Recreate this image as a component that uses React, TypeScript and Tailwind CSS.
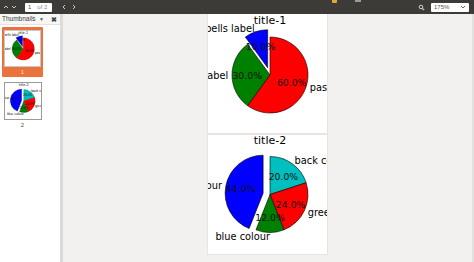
import React from 'react'

const chartFont = '"DejaVu Sans", "Liberation Sans", sans-serif'

type Slice = { frac: number; color: string; label: string; explode?: number }

const R = 38

// point on a circle, degrees counter-clockwise from 3 o'clock, screen y down
const pt = (cx: number, cy: number, r: number, deg: number) => {
  const a = (deg * Math.PI) / 180
  return [cx + r * Math.cos(a), cy - r * Math.sin(a)]
}

const PieChart = ({
  title,
  slices,
  clockwise,
  cy,
}: {
  title: string
  slices: Slice[]
  clockwise?: boolean
  cy: number
}) => {
  const cx = 62
  let angle = 90
  const parts = slices.map((s) => {
    const sweep = 360 * s.frac
    const a1 = clockwise ? angle - sweep : angle
    const a2 = clockwise ? angle : angle + sweep
    angle = clockwise ? angle - sweep : angle + sweep
    const mid = (a1 + a2) / 2
    const [ox, oy] = s.explode ? pt(0, 0, s.explode, mid) : [0, 0]
    const x = cx + ox
    const y = cy + oy
    const [x1, y1] = pt(x, y, R, a1)
    const [x2, y2] = pt(x, y, R, a2)
    const large = sweep > 180 ? 1 : 0
    const d = `M${x},${y} L${x1},${y1} A${R},${R} 0 ${large} 0 ${x2},${y2} Z`
    const [px, py] = pt(x, y, R * 0.6, mid)
    const [lx, ly] = pt(x, y, R * 1.1, mid)
    const left = Math.cos((mid * Math.PI) / 180) > 0.01
    return { s, d, px, py, lx, ly, left }
  })

  return (
    <svg width="119" height="119" viewBox="0 0 119 119" className="block" style={{ fontFamily: chartFont }}>
      <rect width="119" height="119" fill="#ffffff" />
      <text x={cx} y={cy - 51} fontSize="11" textAnchor="middle" fill="#000">
        {title}
      </text>
      {parts.map((p, i) => (
        <path key={i} d={p.d} fill={p.s.color} stroke="#000" strokeWidth="0.6" strokeLinejoin="round" />
      ))}
      {parts.map((p, i) => (
        <text key={'p' + i} x={p.px} y={p.py} fontSize="9.3" textAnchor="middle" dominantBaseline="central" fill="#111">
          {(p.s.frac * 100).toFixed(1)}%
        </text>
      ))}
      {parts.map((p, i) => (
        <text
          key={'l' + i}
          x={p.lx}
          y={p.ly}
          fontSize="9.8"
          textAnchor={p.left ? 'start' : 'end'}
          dominantBaseline="central"
          fill="#000"
        >
          {p.s.label}
        </text>
      ))}
    </svg>
  )
}

const Page1 = () => (
  <PieChart
    title="title-1"
    cy={61}
    slices={[
      { frac: 0.1, color: '#0000ff', label: 'bells label', explode: 7.6 },
      { frac: 0.3, color: '#008000', label: 'green label' },
      { frac: 0.6, color: '#ff0000', label: 'pasta label' },
    ]}
  />
)

const Page2 = () => (
  <PieChart
    title="title-2"
    cy={59.5}
    clockwise
    slices={[
      { frac: 0.2, color: '#00bfbf', label: 'back colour' },
      { frac: 0.24, color: '#ff0000', label: 'green colour' },
      { frac: 0.12, color: '#008000', label: 'blue colour' },
      { frac: 0.44, color: '#0000ff', label: 'red colour', explode: 7 },
    ]}
  />
)

const Chevron = ({ dir }: { dir: 'up' | 'down' | 'left' | 'right' }) => {
  const d = {
    up: 'M1 4 L3 2 L5 4',
    down: 'M1 2 L3 4 L5 2',
    left: 'M4 1 L2 3 L4 5',
    right: 'M2 1 L4 3 L2 5',
  }[dir]
  return (
    <svg width="6" height="6" viewBox="0 0 6 6" className="block">
      <path d={d} fill="none" stroke="#c9c8c4" strokeWidth="1" />
    </svg>
  )
}

const Toolbar = () => (
  <div className="flex h-[14px] items-center bg-[#3c3b37] pl-[3px]" style={{ fontFamily: '"Liberation Sans", sans-serif' }}>
    <Chevron dir="up" />
    <div className="ml-[2px]">
      <Chevron dir="down" />
    </div>
    <div className="ml-[8px] flex h-[9px] w-[27px] items-center rounded-[1px] bg-white pl-[3px] text-[6px] leading-none text-[#555]">
      <span>1</span>
      <span className="ml-[6px] text-[#888]">of 2</span>
    </div>
    <div className="ml-[9px]">
      <Chevron dir="left" />
    </div>
    <div className="ml-[4px]">
      <Chevron dir="right" />
    </div>
    <div className="ml-[255px] h-[3px] w-[5px] self-start rounded-b-[1px] bg-[#e9a33b]" />
    <div className="ml-[18px] h-[2px] w-[6px] self-start bg-[#9c9b97]" />
    <svg width="7" height="7" viewBox="0 0 7 7" className="ml-[57px] block">
      <circle cx="3" cy="3" r="1.8" fill="none" stroke="#d4d3cf" strokeWidth="1" />
      <path d="M4.3 4.3 L6.2 6.2" stroke="#d4d3cf" strokeWidth="1.2" />
    </svg>
    <div className="ml-[6px] flex h-[9px] w-[38px] items-center justify-between rounded-[1px] bg-white px-[3px] text-[6px] leading-none text-[#555]">
      <span>175%</span>
      <svg width="6" height="6" viewBox="0 0 6 6" className="block">
        <path d="M1 2 L3 4 L5 2" fill="none" stroke="#555" strokeWidth="0.9" />
      </svg>
    </div>
  </div>
)

const Sidebar = () => (
  <div
    className="flex w-[63px] flex-col border-r-[3px] border-[#dcdbd8] bg-white"
    style={{ fontFamily: '"Liberation Sans", sans-serif' }}
  >
    <div className="flex h-[11px] items-center border-b border-[#e4e3e0] bg-[#f6f6f5] pl-[2px] pr-[3px] text-[6.5px] leading-none text-[#3c3c3c]">
      <span>Thumbnails</span>
      <span className="ml-auto text-[5px] text-[#555]">▼</span>
      <span className="ml-[7px] text-[7px] font-bold text-[#444]">✖</span>
    </div>
    <div className="flex flex-col pl-[2px] pt-[2px]">
      <div className="flex w-[41px] flex-col items-center rounded-[1px] bg-[#e9733b] pt-[3px]">
        <div className="border border-[#c8c8c8] bg-white">
          <svg width="35" height="35" viewBox="0 0 119 119" className="block">
            <foreignObject width="119" height="119">
              <Page1 />
            </foreignObject>
          </svg>
        </div>
        <span className="h-[10px] pt-[1px] text-[6px] leading-[8px] text-[#fbe3d6]">1</span>
      </div>
      <div className="ml-[1px] mt-[5px] flex w-[39px] flex-col items-center">
        <div className="border border-[#9a9a9a] bg-white">
          <svg width="36" height="36" viewBox="0 0 119 119" className="block">
            <foreignObject width="119" height="119">
              <Page2 />
            </foreignObject>
          </svg>
        </div>
        <span className="pt-[1px] text-[6px] leading-[8px] text-[#555]">2</span>
      </div>
    </div>
  </div>
)

export default function App() {
  return (
    <div className="flex h-[262px] w-[474px] flex-col overflow-hidden bg-[#f2f1f0]">
      <Toolbar />
      <div className="flex min-h-0 flex-1">
        <Sidebar />
        <div className="flex flex-1 flex-col items-center gap-[2px] overflow-hidden border-r-2 border-[#e2e1de] bg-[#f2f1f0] pr-[1px]">
          <div className="h-[119px] w-[119px] shadow-[0_0_0_1px_#e6e5e2]">
            <Page1 />
          </div>
          <div className="h-[119px] w-[119px] shadow-[0_0_0_1px_#e6e5e2]">
            <Page2 />
          </div>
        </div>
      </div>
    </div>
  )
}
